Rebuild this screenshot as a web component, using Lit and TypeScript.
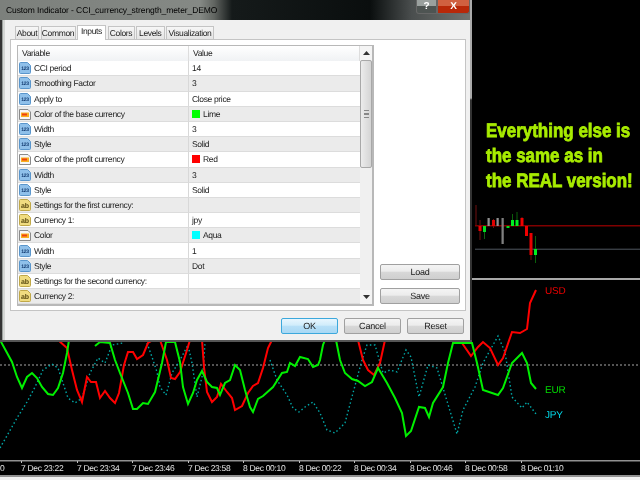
import { LitElement, html, css, svg } from "lit";
import { customElement } from "lit/decorators.js";

const GREEN = [
  [[0,340],[12,362],[17,377],[22,388],[27,377],[32,373],[37,378],[42,387],[48,394],[53,395],[58,388],[63,373],[67,353],[69,340]],
  [[95,346],[100,342],[110,343],[115,360],[120,373],[128,393],[133,409],[137,409],[143,403],[148,404],[155,392],[162,363],[166,342],[175,342],[180,362],[183,387],[188,404],[193,393],[197,380],[202,371],[207,382],[212,387],[217,388],[220,395],[225,383],[230,380],[235,365],[240,370],[245,390],[250,407],[253,412],[258,399],[263,396],[273,387],[282,373],[287,372],[290,363],[295,366],[300,357],[308,359],[313,367],[318,365],[320,360],[323,345],[325,340]],
  [[336,340],[340,360],[345,373],[352,379],[358,381],[365,386],[372,382],[378,368],[387,383],[395,398],[402,413],[406,436],[411,431],[419,407],[425,408],[429,417],[433,403],[443,387],[448,363],[453,343],[472,343],[477,363],[483,390],[498,395],[503,388],[512,363],[522,353],[527,363],[531,383],[536,389]],
];
const RED = [
  [[58,340],[67,348],[72,370],[77,390],[82,402],[87,377],[91,382],[96,382],[100,398],[105,391],[110,398],[115,403],[119,393],[124,365],[128,352],[133,352],[137,359],[143,355],[148,343],[153,340],[160,340],[167,360],[171,378],[175,379],[180,372],[187,350],[190,340]],
  [[202,340],[204,367],[207,392],[212,402],[217,397],[221,384],[227,392],[232,398],[235,410],[242,406],[248,393],[253,386],[258,383],[263,368],[268,348],[272,340]],
  [[358,340],[363,360],[368,370],[374,375],[380,363],[385,340]],
  [[462,343],[471,356],[478,347],[483,342],[490,348],[498,365],[503,358],[512,332],[520,333],[527,329],[530,303],[536,290]],
];
const CYAN = [
  [[0,448],[17,418],[27,402],[35,387],[43,370],[52,364],[58,368],[63,383],[68,398],[75,403],[82,398],[90,373],[98,358],[105,363],[112,345],[123,343]],
  [[147,343],[152,357],[157,372],[160,387],[166,395],[172,373],[180,360],[188,345],[192,363],[197,397],[203,373],[205,343]],
  [[270,360],[277,380],[287,395],[293,408],[299,412],[305,407],[313,402],[320,413],[327,430],[335,433],[345,423],[353,393],[362,360],[367,345],[375,345],[383,373],[390,370],[397,372],[406,350],[411,357],[419,397],[428,365],[437,368],[457,434],[463,410],[475,387],[483,363],[498,336],[505,352],[512,397],[522,408],[527,402],[536,414]],
];
const CANDLES: [number, number, number, number, number, string, string][] = [
  [480,220,240,226,231,"#f00000","#701010"],
  [484.5,226,239,226,232,"#00e020","#106010"],
  [489,218,226,218,226,"#909090","#909090"],
  [493.5,219,228,220,226,"#e00000","#701010"],
  [498,218,226,218,226,"#909090","#909090"],
  [503,218,244,218,244,"#808080","#808080"],
  [508,226,228,226,228,"#00e020","#00e020"],
  [512.5,214,226,220,226,"#00f020","#0a600a"],
  [517,212,226,220,226,"#00f020","#0a600a"],
  [522,217,226,218,226,"#f00000","#701010"],
  [526.5,226,236,226,236,"#f00000","#f00000"],
  [531,233,260,233,255,"#e80000","#701010"],
  [535.5,236,263,249,255,"#00f020","#0a600a"],
];
const TICKS = [
  ["7 Dec 23:22",21],["7 Dec 23:34",77],["7 Dec 23:46",132],["7 Dec 23:58",188],["8 Dec 00:10",243],
  ["8 Dec 00:22",299],["8 Dec 00:34",354],["8 Dec 00:46",410],["8 Dec 00:58",465],["8 Dec 01:10",521],
] as [string, number][];

type Kind = "num" | "text" | "color";
const ROWS: [Kind, string, string, string?][] = [
  ["num","CCI period","14"],
  ["num","Smoothing Factor","3"],
  ["num","Apply to","Close price"],
  ["color","Color of the base currency","Lime","#00ff00"],
  ["num","Width","3"],
  ["num","Style","Solid"],
  ["color","Color of the profit currency","Red","#ff0000"],
  ["num","Width","3"],
  ["num","Style","Solid"],
  ["text","Settings for the first currency:",""],
  ["text","Currency 1:","jpy"],
  ["color","Color","Aqua","#00ffff"],
  ["num","Width","1"],
  ["num","Style","Dot"],
  ["text","Settings for the second currency:",""],
  ["text","Currency 2:",""],
];
const TABS = ["About","Common","Inputs","Colors","Levels","Visualization"];

const pts = (p: number[][]) => p.map((q) => q.join(",")).join(" ");

function icon(k: Kind) {
  if (k === "color")
    return html`<svg class="icon" viewBox="0 0 12 12"><path d="M.5 1.5h8.5l2.5 2.5v7.500h-11z" fill="#f6f6f6" stroke="#8a8a8a"/><rect x="2" y="4.500" width="8" height="4.500" fill="#f8b020"/><rect x="3" y="5.500" width="5" height="2" fill="#f04010"/></svg>`;
  const num = k === "num";
  return html`<svg class="icon" viewBox="0 0 12 12"><path d="M1.500.5h7l3 3v7a1 1 0 0 1-1 1h-9a1 1 0 0 1-1-1v-9a1 1 0 0 1 1-1z" fill="${num ? "#8fc0ea" : "#f0dc80"}" stroke="${num ? "#5a96cc" : "#c0a848"}"/><text x="6" y="${num ? 8.3 : 8.6}" text-anchor="middle" class="${num ? "t123" : "tab-glyph"}">${num ? "123" : "ab"}</text></svg>`;
}

@customElement("app-root")
export class AppRoot extends LitElement {
  static styles = css`
    :host { display: block; position: relative; width: 640px; height: 480px; background: #000; overflow: hidden;
      font-family: "Liberation Sans", Arial, sans-serif; text-rendering: geometricPrecision; }
    .chart { position: absolute; left: 0; top: 0; width: 640px; height: 480px; filter: blur(0.3px); }
    .chart text { font-family: "Liberation Sans", Arial, sans-serif; }
    .axis { font-size: 8.5px; fill: #e4e4e4; letter-spacing: -0.32px; }
    .lbl { font-size: 10px; letter-spacing: -0.2px; }
    .promo { position: absolute; left: 486px; top: 119px; color: #a8ec00; font-size: 19.5px; font-weight: 700;
      line-height: 25px; white-space: nowrap; -webkit-text-stroke: 0.8px #a8ec00; transform: scaleX(0.87); transform-origin: left top; filter: blur(0.3px); }
    .win { position: absolute; left: 0; top: 0; width: 472px; height: 342px; box-sizing: border-box; display: flex; flex-direction: column;
      background: linear-gradient(90deg, #333 0 2px, #9a9f9c 2px 3px, #d4d6d4 3px 5px, #d8d8d8 5px);
      border-bottom: 2px solid #555; font-size: 8.5px; letter-spacing: -0.35px; color: #1c1c1c; filter: blur(0.25px); }
    .edge { position: absolute; right: 0; top: 0; width: 2px; height: 100%; background: linear-gradient(#aaa 0 98px, #333 100px); }
    .title { height: 20px; flex: none; display: flex; align-items: center; padding-left: 6px; box-sizing: border-box;
      background: linear-gradient(90deg, #7c807c 0, #858985 200px, #626662 214px, #151a1a 232px, #0a0e0e 370px, #4a4e4e 412px, #70736f 470px);
      font-size: 8.5px; letter-spacing: -0.09px; color: #000; position: relative; white-space: nowrap; }
    .ctl { position: absolute; top: 0; height: 14px; display: flex; align-items: center; justify-content: center; color: #fff; font-weight: 700; font-size: 10px; box-sizing: border-box; }
    .help { left: 416px; width: 21px; background: linear-gradient(#9aa09e 50%, #4e5452 50%); border: 1px solid #666; border-top: 0; border-radius: 0 0 0 3px; }
    .close { left: 437px; width: 33px; background: linear-gradient(#d06040 50%, #b82808 50%); border: 1px solid #666; border-top: 0; border-radius: 0 0 3px 0; }
    .client { flex: 1; margin: 0 2px 0 5px; background: #f0f0f0; display: flex; flex-direction: column; min-height: 0; }
    .tabs { height: 19px; flex: none; display: flex; align-items: flex-end; padding-left: 10px; gap: 1.5px; box-sizing: border-box; }
    .tab { width: 24px; height: 13px; box-sizing: border-box; border: 1px solid #c4c4c4; border-bottom: 0; line-height: 12px; background: linear-gradient(#f6f6f6, #e4e4e4); text-align: center; }
    .tab:nth-child(2) { width: 35px; }
    .tab:nth-child(3) { width: 29px; }
    .tab:nth-child(4) { width: 27px; }
    .tab:nth-child(5) { width: 28.5px; }
    .tab:nth-child(6) { width: 48px; }
    .tab.on { height: 15px; background: #fff; line-height: 11px; margin-bottom: -1px; position: relative; z-index: 1; }
    .panel { height: 272px; flex: none; margin: 0 4px 0 5px; background: #fff; border: 1px solid #c4c4c4; box-sizing: border-box; display: flex; padding: 5px 6px 4px; gap: 6px; }
    .grid { width: 357px; flex: none; border: 2px solid #b8b8b8; border-width: 1px 2px 2px 1px; box-sizing: border-box; display: grid; grid-template-columns: 342px 12px; background: #fff; }
    .rows { display: grid; grid-template-columns: 171px 171px; grid-auto-rows: 15.2px; align-content: start; }
    .hd { height: 14.500px; padding: 0 4px; display: flex; align-items: center; background: linear-gradient(#fff, #f0f2f4); border-right: 1px solid #ddd; }
    .cell { display: flex; align-items: center; gap: 3px; white-space: nowrap; border-bottom: 1px solid #dcdcdc; box-sizing: border-box; }
    .cell.a { padding-left: 1px; border-right: 1px solid #d8d8d8; }
    .cell.b { padding-left: 3px; gap: 3px; }
    .cell.alt { background: #ebebeb; }
    .icon { width: 12px; height: 12px; flex: none; }
    .t123 { font: 700 5px "Liberation Sans", sans-serif; letter-spacing: -0.2px; fill: #123a70; }
    .tab-glyph { font: 700 7px "Liberation Sans", sans-serif; letter-spacing: 0; fill: #5a4a10; }
    .swatch { width: 8px; height: 8px; flex: none; }
    .sb { display: flex; flex-direction: column; background: #f0f0f0; }
    .arrow { height: 14px; flex: none; background: #f4f4f4; display: flex; align-items: center; justify-content: center; }
    .thumb { height: 108px; flex: none; background: linear-gradient(90deg, #ececec, #d4d4d4); border: 1px solid #a8a8a8; box-sizing: border-box; border-radius: 2px; display: flex; align-items: center; justify-content: center; }
    .grip { width: 5px; height: 6px; border-top: 1px solid #888; border-bottom: 1px solid #888; background: linear-gradient(#fff0 40%, #888 40% 60%, #fff0 60%); }
    .sp { flex: 1; }
    .side { flex: 1; display: flex; flex-direction: column; justify-content: flex-end; gap: 8px; padding-bottom: 2px; }
    .btn { height: 16px; box-sizing: border-box; border: 1px solid #a0a0a0; border-radius: 2px; background: linear-gradient(#f4f4f4, #ececec 45%, #d8d8d8 50%, #cfcfcf); display: flex; align-items: center; justify-content: center; color: #222; font-size: 9px; letter-spacing: -0.2px; }
    .side .btn { width: 80px; }
    .foot { flex: 1; display: flex; justify-content: flex-end; align-items: center; padding-right: 6px; gap: 6px; }
    .foot .btn { width: 57px; }
    .ok { border-color: #3ca8dc; background: linear-gradient(#e8f6fe, #d0ecfb 45%, #b8e0f8 50%, #a8d8f4); }
  `;

  render() {
    return html`
      <svg class="chart" viewBox="0 0 640 480">
        <rect x="475.500" y="205" width="1" height="21" fill="#701010"/>
        <rect x="475" y="225" width="165" height="1.500" fill="#800000"/>
        <rect x="475" y="248.700" width="165" height="1" fill="#505860"/>
        ${CANDLES.map(([x, wt, wb, bt, bb, c, wc]) => svg`
          <rect x="${x - 0.5}" y="${wt}" width="1" height="${wb - wt}" fill="${wc}"/>
          <rect x="${x - 1.500}" y="${bt}" width="${c === "#808080" || c === "#909090" ? 2 : 3}" height="${bb - bt}" fill="${c}"/>`)}
        <rect x="472" y="278" width="168" height="2" fill="#a8a8a8"/>
        <line x1="0" x2="640" y1="365" y2="365" stroke="#a8a8a8" stroke-dasharray="2 2"/>
        ${CYAN.map((l) => svg`<polyline points="${pts(l)}" fill="none" stroke="#00a8a8" stroke-width="1.400" stroke-dasharray="1.500 2.500"/>`)}
        ${RED.map((l) => svg`<polyline points="${pts(l)}" fill="none" stroke="#ff0000" stroke-width="2"/>`)}
        ${GREEN.map((l) => svg`<polyline points="${pts(l)}" fill="none" stroke="#00f000" stroke-width="2"/>`)}
        <text class="lbl" x="545" y="294" fill="#f00000">USD</text>
        <text class="lbl" x="545" y="393" fill="#00d800">EUR</text>
        <text class="lbl" x="545" y="418" fill="#00d8e8">JPY</text>
        <rect x="0" y="460" width="640" height="1.500" fill="#909090"/>
        <text class="axis" x="0" y="470.500">0</text>
        ${TICKS.map(([t, x]) => svg`
          <rect x="${x}" y="461" width="1" height="2" fill="#c0c0c0"/>
          <text class="axis" x="${x}" y="470.500">${t}</text>`)}
        <rect x="0" y="475" width="640" height="2" fill="#909090"/>
        <rect x="0" y="477" width="640" height="3" fill="#f0f0f0"/>
      </svg>
      <div class="promo">Everything else is<br>the same as in<br>the REAL version!</div>
      <div class="win">
        <div class="title">Custom Indicator - CCI_currency_strength_meter_DEMO
          <span class="ctl help">?</span><span class="ctl close">X</span></div>
        <div class="client">
          <div class="tabs">${TABS.map((t) => html`<div class="tab ${t === "Inputs" ? "on" : ""}">${t}</div>`)}</div>
          <div class="panel">
            <div class="grid">
              <div class="rows">
                <div class="hd">Variable</div><div class="hd">Value</div>
                ${ROWS.map((r, i) => html`
                  <div class="cell a ${i % 2 ? "alt" : ""}">${icon(r[0])}<span>${r[1]}</span></div>
                  <div class="cell b ${i % 2 ? "alt" : ""}">${r[3] ? html`<span class="swatch" style="background:${r[3]}"></span>` : ""}<span>${r[2]}</span></div>`)}
              </div>
              <div class="sb">
                <div class="arrow"><svg width="7" height="4" viewBox="0 0 7 4"><path d="M3.500 0L7 4H0z" fill="#333"/></svg></div>
                <div class="thumb"><div class="grip"></div></div>
                <div class="sp"></div>
                <div class="arrow"><svg width="7" height="4" viewBox="0 0 7 4"><path d="M0 0h7L3.500 4z" fill="#333"/></svg></div>
              </div>
            </div>
            <div class="side"><div class="btn">Load</div><div class="btn">Save</div></div>
          </div>
          <div class="foot"><div class="btn ok">OK</div><div class="btn">Cancel</div><div class="btn">Reset</div></div>
        </div>
        <div class="edge"></div>
      </div>`;
  }
}
